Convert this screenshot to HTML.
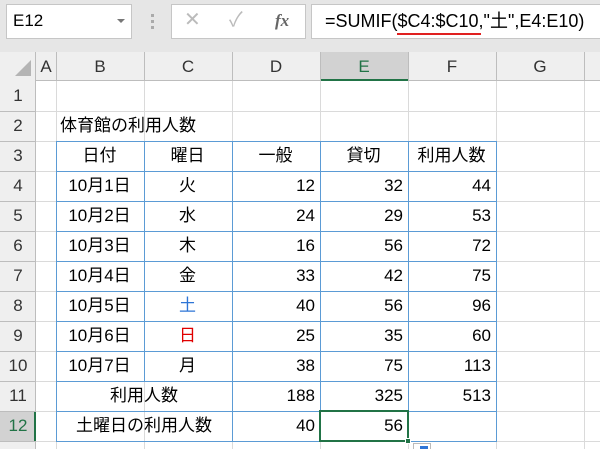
<!DOCTYPE html>
<html><head><meta charset="utf-8"><style>
*{margin:0;padding:0;box-sizing:border-box}
html,body{width:600px;height:449px;overflow:hidden}
body{background:#fff;font-family:"Liberation Sans","Noto Sans CJK JP",sans-serif;position:relative;color:#000}
.a{position:absolute}
.t{position:absolute;font-size:17px;line-height:30px;white-space:nowrap}
</style></head><body>
<div class="a" style="left:0;top:0;width:600px;height:52px;background:#e6e6e6"></div>
<div class="a" style="left:6px;top:4px;width:126px;height:35px;background:#fff;border:1px solid #c6c6c6"></div>
<div class="t" style="left:13px;top:6px;font-size:17px">E12</div>
<div class="a" style="left:117px;top:19px;border-left:4px solid transparent;border-right:4px solid transparent;border-top:4px solid #777"></div>
<div class="a" style="left:151px;top:14px;width:3px;height:3px;background:#aaa;box-shadow:0 6px #aaa,0 12px #aaa"></div>
<div class="a" style="left:171px;top:4px;width:135px;height:35px;background:#fff;border:1px solid #c6c6c6"></div>
<div class="t" style="left:184px;top:5px;font-size:20px;color:#bbb">✕</div>
<div class="t" style="left:229px;top:5px;font-size:20px;color:#bbb">✓</div>
<div class="t" style="left:275px;top:6px;font-size:17px;color:#666;font-family:'Liberation Serif',serif;font-style:italic;font-weight:bold">fx</div>
<div class="a" style="left:311px;top:4px;width:295px;height:35px;background:#fff;border:1px solid #c6c6c6"></div>
<div class="t" style="left:325px;top:6px;font-size:18px">=SUMIF($C4:$C10,"土",E4:E10)</div>
<div class="a" style="left:397px;top:33px;width:84px;height:2px;background:#e02020"></div>

<div class="a" style="left:0;top:52px;width:600px;height:29px;background:#efefef;border-bottom:1px solid #bdbdbd"></div>
<div class="a" style="left:0;top:52px;width:36px;height:397px;background:#efefef;border-right:1px solid #bdbdbd"></div>
<div class="a" style="left:15px;top:60px;width:0;height:0;border-left:16px solid transparent;border-bottom:16px solid #b4b4b4"></div>
<div class="a" style="left:320px;top:52px;width:88px;height:29px;background:#d2d2d2;border-bottom:2px solid #217346"></div>
<div class="a" style="left:0;top:411px;width:36px;height:30px;background:#d2d2d2;border-right:2px solid #217346"></div>
<div id="g"></div>
<script>
var h='';var cols=[36,56,144,232,320,408,496,584,600];var names=['A','B','C','D','E','F','G'];
for(var i=0;i<7;i++){h+='<div class="t" style="left:'+cols[i]+'px;width:'+(cols[i+1]-cols[i])+'px;top:52px;text-align:center;font-size:17px;color:'+(i==4?'#217346':'#333')+'">'+names[i]+'</div>';}
for(var i=1;i<8;i++)h+='<div class="a" style="left:'+cols[i]+'px;top:52px;width:1px;height:397px;background:#dadada"></div>';
for(var i=1;i<8;i++)h+='<div class="a" style="left:'+cols[i]+'px;top:52px;width:1px;height:29px;background:#bdbdbd"></div>';
for(var r=1;r<=12;r++){var y=81+(r-1)*30;h+='<div class="a" style="left:0;top:'+(y+30)+'px;width:600px;height:1px;background:#dadada"></div>';
h+='<div class="t" style="left:0;width:36px;top:'+y+'px;text-align:center;font-size:17px;color:'+(r==12?'#217346':'#333')+'">'+r+'</div>';
h+='<div class="a" style="left:0;top:'+(y+30)+'px;width:36px;height:1px;background:#bdbdbd"></div>';}
var B='#5b9bd5';
function ln(x,y,w,hh){h+='<div class="a" style="left:'+x+'px;top:'+y+'px;width:'+w+'px;height:'+hh+'px;background:'+B+'"></div>';}
for(var r=3;r<=13;r++)ln(56,81+(r-1)*30,441,1);
ln(56,141,1,300);ln(144,141,1,240);for(var i=3;i<7;i++)ln(cols[i],141,1,300);
function tx(c,r,s,al,col){var x=cols[c],w=cols[c+1]-x;var y=81+(r-1)*30;h+='<div class="t" style="left:'+(x+4)+'px;width:'+(w-9)+'px;top:'+y+'px;text-align:'+al+';color:'+(col||'#000')+'">'+s+'</div>';}
tx(1,2,'体育館の利用人数','left');
var hd=['日付','曜日','一般','貸切','利用人数'];for(var i=0;i<5;i++)tx(i+1,3,hd[i],'center');
var d=[['10月1日','火',12,32,44],['10月2日','水',24,29,53],['10月3日','木',16,56,72],['10月4日','金',33,42,75],['10月5日','土',40,56,96],['10月6日','日',25,35,60],['10月7日','月',38,75,113]];
for(var k=0;k<7;k++){var r=4+k;tx(1,r,d[k][0],'center');tx(2,r,d[k][1],'center',k==4?'#2e75d6':k==5?'#e00000':'#000');tx(3,r,d[k][2],'right');tx(4,r,d[k][3],'right');tx(5,r,d[k][4],'right');}
h+='<div class="t" style="left:56px;width:176px;top:381px;text-align:center">利用人数</div>';
tx(3,11,188,'right');tx(4,11,325,'right');tx(5,11,513,'right');
h+='<div class="t" style="left:56px;width:176px;top:411px;text-align:center">土曜日の利用人数</div>';
tx(3,12,40,'right');tx(4,12,56,'right');
h+='<div class="a" style="left:319px;top:410px;width:90px;height:32px;border:2px solid #217346"></div>';
h+='<div class="a" style="left:405px;top:438px;width:6px;height:6px;background:#217346;border:1px solid #fff"></div>';
h+='<div class="a" style="left:413px;top:443px;width:18px;height:8px;border:1px solid #bbb;background:#fff"></div><div class="a" style="left:420px;top:446px;width:8px;height:3px;background:#2e75d6"></div>';
document.getElementById('g').innerHTML=h;
</script>
</body></html>
